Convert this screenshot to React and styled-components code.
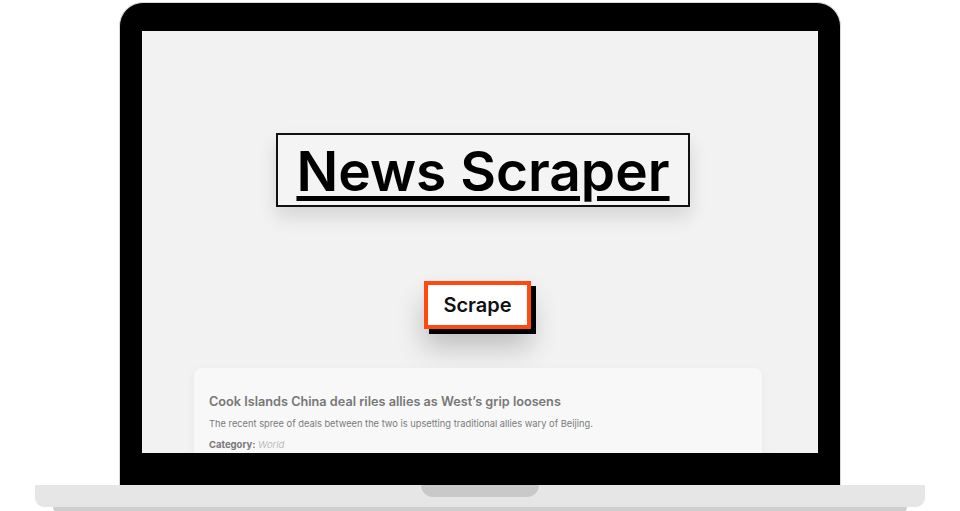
import styled, { createGlobalStyle } from 'styled-components'

const GlobalStyle = createGlobalStyle`
  html, body {
    margin: 0;
    padding: 0;
    background: #ffffff;
    overflow: hidden;
  }
  body {
    font-family: Inter, "Noto Sans", sans-serif;
  }
`

const Stage = styled.div`
  width: 960px;
  height: 511px;
  display: flex;
  flex-direction: column;
  align-items: center;
  padding-top: 2px;
  box-sizing: border-box;
  overflow: hidden;
`

const Bezel = styled.div`
  flex-shrink: 0;
  width: 722px;
  height: 483px;
  box-sizing: border-box;
  background: #000;
  border: 1px solid #d8d8d8;
  border-bottom: none;
  border-radius: 24px 24px 0 0;
  padding: 28px 22px 32px;
  display: flex;
`

const Screen = styled.div`
  flex: 1;
  background: #f2f2f2;
  overflow: hidden;
  display: flex;
  flex-direction: column;
  align-items: center;
  padding-top: 102px;
  & > * {
    flex-shrink: 0;
  }
`

const TitleBox = styled.div`
  height: 74px;
  box-sizing: border-box;
  border: 2px solid #111;
  background: #f4f4f4;
  padding: 0 18px;
  margin-left: 6px;
  display: flex;
  align-items: center;
  box-shadow: 0 10px 18px rgba(0, 0, 0, 0.12);
`

const Title = styled.h1`
  margin: 2px 0 0;
  font-family: Inter, "Noto Sans", sans-serif;
  font-weight: 600;
  font-size: 55px;
  line-height: 1;
  color: #000;
  text-decoration: underline;
  text-decoration-thickness: 5px;
  text-underline-offset: 5px;
`

const ScrapeButton = styled.button`
  margin-top: 74px;
  margin-right: 5px;
  width: 107px;
  height: 48px;
  box-sizing: border-box;
  background: #fff;
  border: 4px solid #ff4a0f;
  font-family: Inter, "Noto Sans", sans-serif;
  font-weight: 600;
  font-size: 20px;
  color: #111;
  padding: 0;
  cursor: pointer;
  box-shadow: 5px 5px 0 #000, 0 18px 28px rgba(0, 0, 0, 0.22);
`

const Card = styled.div`
  margin-top: 39px;
  margin-right: 4px;
  width: 568px;
  box-sizing: border-box;
  background: #f8f8f8;
  border-radius: 8px;
  padding: 26px 15px 20px;
  box-shadow: 0 2px 10px rgba(0, 0, 0, 0.05);
  display: flex;
  flex-direction: column;
  gap: 8px;
  color: #777;
`

const CardTitle = styled.h2`
  margin: 0 0 1px;
  font-family: Inter, "Noto Sans", sans-serif;
  font-size: 12.7px;
  font-weight: 600;
  color: #777;
`

const CardText = styled.p`
  margin: 0;
  font-size: 9.3px;
  font-family: Inter, "Noto Sans", sans-serif;
  color: #7a7a7a;
`

const Meta = styled.p`
  margin: 2px 0 0;
  font-size: 9.5px;
  font-family: Inter, "Noto Sans", sans-serif;
  color: #777;
  b {
    font-weight: 700;
  }
  i {
    color: #bbb;
  }
`

const Base = styled.div`
  flex-shrink: 0;
  width: 890px;
  height: 22px;
  background: #e6e6e6;
  border-radius: 0 0 9px 9px;
  display: flex;
  justify-content: center;
`

const Notch = styled.div`
  width: 118px;
  height: 12px;
  background: #c9c9c9;
  border-radius: 0 0 12px 12px;
`

const Foot = styled.div`
  flex-shrink: 0;
  width: 854px;
  height: 6px;
  background: #cfcfcf;
  border-radius: 0 0 6px 6px;
`

export default function App() {
  return (
    <>
      <GlobalStyle />
      <Stage>
        <Bezel>
          <Screen>
            <TitleBox>
              <Title>News Scraper</Title>
            </TitleBox>
            <ScrapeButton>Scrape</ScrapeButton>
            <Card>
              <CardTitle>Cook Islands China deal riles allies as West’s grip loosens</CardTitle>
              <CardText>
                The recent spree of deals between the two is upsetting traditional allies wary of Beijing.
              </CardText>
              <Meta>
                <b>Category:</b> <i>World</i>
              </Meta>
            </Card>
          </Screen>
        </Bezel>
        <Base>
          <Notch />
        </Base>
        <Foot />
      </Stage>
    </>
  )
}
